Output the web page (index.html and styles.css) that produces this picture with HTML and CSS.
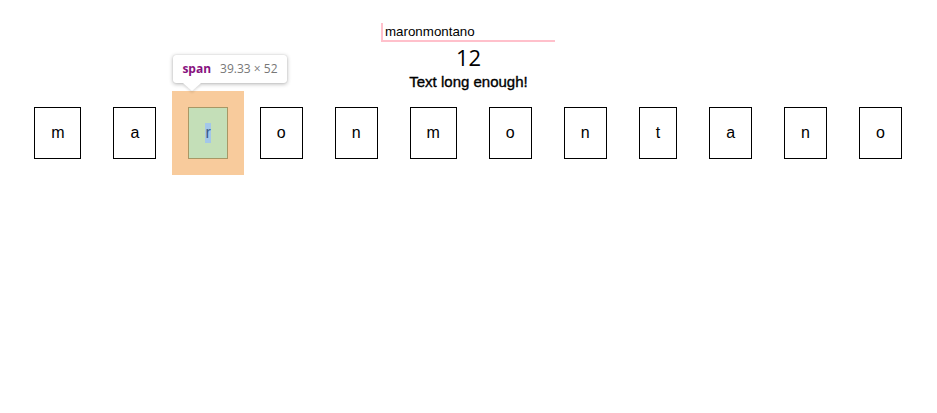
FILE: index.html
```html
<!DOCTYPE html>
<html>
<head>
<meta charset="utf-8">
<link rel="stylesheet" href="styles.css">
</head>
<body>
<div class="app">
  <input class="name-input" type="text" value="maronmontano">
  <div class="count">12</div>
  <div class="status">Text long enough!</div>
  <div class="letters">
    <span class="letter">m</span>
    <span class="letter">a</span>
    <span class="letter hl"><span class="hl-content">r</span>
      <div class="tip"><span class="tip-tag">span</span><span class="tip-size">39.33 × 52</span><i class="tip-arrow"></i></div>
    </span>
    <span class="letter">o</span>
    <span class="letter">n</span>
    <span class="letter">m</span>
    <span class="letter">o</span>
    <span class="letter">n</span>
    <span class="letter">t</span>
    <span class="letter">a</span>
    <span class="letter">n</span>
    <span class="letter">o</span>
  </div>
</div>
</body>
</html>
```
FILE: styles.css
```css
html, body {
  margin: 0;
  padding: 0;
  background: #fff;
}
body {
  margin: 8px;
  font-family: "Liberation Sans", Arial, sans-serif;
  color: #000;
}
.app {
  display: flex;
  flex-direction: column;
  align-items: center;
  padding-top: 15px;
}
.name-input {
  box-sizing: border-box;
  width: 174px;
  height: 19px;
  margin: 0 1px 0 0;
  padding: 1px 2px;
  border: none;
  border-left: 2px solid #ffc0cb;
  border-bottom: 2px solid #ffc0cb;
  font-family: "Liberation Sans", Arial, sans-serif;
  font-size: 13.333px;
  color: #000;
  outline: none;
  background: #fff;
}
.count {
  font-family: "Open Sans", sans-serif;
  font-size: 22px;
  line-height: 30px;
  height: 30px;
}
.status {
  font-size: 15px;
  line-height: 19px;
  height: 19px;
  -webkit-text-stroke: 0.35px #000;
}
.letters {
  align-self: stretch;
  margin: 0 -8px 0 -9px;
  display: flex;
  justify-content: center;
}
.letter {
  position: relative;
  display: block;
  margin: 16px;
  padding: 16px;
  border: 1px solid #000;
  font-size: 16px;
  line-height: 18px;
  height: 18px;
}
.hl {
  background: #c4dfb8;
  border-color: #a89765;
  box-shadow: 0 0 0 16px #f8cb9c;
}
.hl-content {
  display: inline-block;
  background: #a3c7e9;
  color: #3a5a88;
  vertical-align: top;
  line-height: 20px;
  height: 20px;
  margin-top: -1px;
}
.tip {
  position: absolute;
  left: -16px;
  top: -53px;
  width: 114px;
  height: 28px;
  box-sizing: border-box;
  padding-left: 9px;
  background: #fff;
  border-radius: 3px;
  box-shadow: 0 1px 4px rgba(0,0,0,0.3), 0 0 1px rgba(0,0,0,0.2);
  font-family: "Open Sans", sans-serif;
  font-size: 12px;
  line-height: 28px;
  white-space: nowrap;
  display: flex;
  align-items: center;
  gap: 9px;
}
.tip-tag {
  color: #881280;
  font-weight: 700;
}
.tip-size {
  color: #777;
}
.tip-arrow {
  position: absolute;
  left: 10px;
  bottom: -8px;
  width: 0;
  height: 0;
  border-left: 9px solid transparent;
  border-right: 9px solid transparent;
  border-top: 8px solid #fff;
  filter: drop-shadow(0 2px 1px rgba(0,0,0,0.12));
}
```
